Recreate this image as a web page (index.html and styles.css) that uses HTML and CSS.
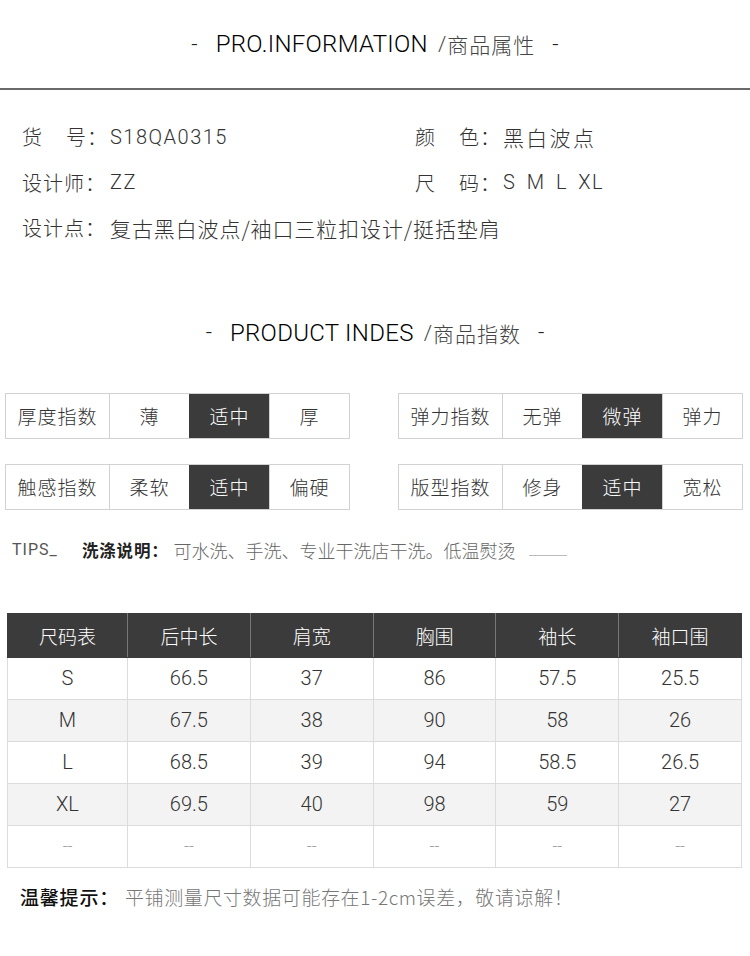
FILE: index.html
```html
<!DOCTYPE html>
<html lang="zh-CN">
<head>
<meta charset="utf-8">
<title>商品属性</title>
<link rel="stylesheet" href="styles.css">
</head>
<body>
<div class="page">
  <header class="sec-title first">
    <span class="dash">-</span>
    <span class="en">PRO.INFORMATION</span>
    <span class="slash">/</span><span class="cn">商品属性</span>
    <span class="dash">-</span>
  </header>
  <div class="rule"></div>

  <section class="info">
    <div class="info-row">
      <div class="item"><span class="lbl">货<i class="sp"></i>号：</span><span class="val">S18QA0315</span></div>
      <div class="item right"><span class="lbl">颜<i class="sp"></i>色：</span><span class="val cjk">黑白波点</span></div>
    </div>
    <div class="info-row">
      <div class="item"><span class="lbl">设计师：</span><span class="val">ZZ</span></div>
      <div class="item right"><span class="lbl">尺<i class="sp"></i>码：</span><span class="val sizes">S M L XL</span></div>
    </div>
    <div class="info-row">
      <div class="item wide"><span class="lbl">设计点：</span><span class="val cjk tight">复古黑白波点/袖口三粒扣设计/挺括垫肩</span></div>
    </div>
  </section>

  <header class="sec-title second">
    <span class="dash">-</span>
    <span class="en">PRODUCT INDES</span>
    <span class="slash">/</span><span class="cn">商品指数</span>
    <span class="dash">-</span>
  </header>

  <section class="indexes">
    <div class="idx-row">
      <div class="idx"><div class="c lab">厚度指数</div><div class="c">薄</div><div class="c on">适中</div><div class="c">厚</div></div>
      <div class="idx"><div class="c lab">弹力指数</div><div class="c">无弹</div><div class="c on">微弹</div><div class="c">弹力</div></div>
    </div>
    <div class="idx-row">
      <div class="idx"><div class="c lab">触感指数</div><div class="c">柔软</div><div class="c on">适中</div><div class="c">偏硬</div></div>
      <div class="idx"><div class="c lab">版型指数</div><div class="c">修身</div><div class="c on">适中</div><div class="c">宽松</div></div>
    </div>
  </section>

  <div class="tips">
    <span class="tips-en">TIPS_</span>
    <span class="tips-lbl">洗涤说明：</span>
    <span class="tips-txt">可水洗、手洗、专业干洗店干洗。低温熨烫</span>
    <span class="tips-line"></span>
  </div>

  <table class="size-table">
    <thead>
      <tr><th>尺码表</th><th>后中长</th><th>肩宽</th><th>胸围</th><th>袖长</th><th>袖口围</th></tr>
    </thead>
    <tbody>
      <tr><td>S</td><td>66.5</td><td>37</td><td>86</td><td>57.5</td><td>25.5</td></tr>
      <tr class="alt"><td>M</td><td>67.5</td><td>38</td><td>90</td><td>58</td><td>26</td></tr>
      <tr><td>L</td><td>68.5</td><td>39</td><td>94</td><td>58.5</td><td>26.5</td></tr>
      <tr class="alt"><td>XL</td><td>69.5</td><td>40</td><td>98</td><td>59</td><td>27</td></tr>
      <tr class="empty"><td>--</td><td>--</td><td>--</td><td>--</td><td>--</td><td>--</td></tr>
    </tbody>
  </table>

  <p class="note"><span class="note-lbl">温馨提示：</span><span class="note-txt">平铺测量尺寸数据可能存在1-2cm误差，敬请谅解！</span></p>
</div>
</body>
</html>
```

FILE: styles.css
```css
html, body {
  margin: 0;
  padding: 0;
  background: #fff;
}
body {
  font-family: Roboto, "Noto Sans CJK SC", sans-serif;
  color: #333;
}
.page {
  width: 750px;
  height: 956px;
  overflow: hidden;
}

/* section titles */
.sec-title {
  display: flex;
  justify-content: center;
  align-items: center;
  height: 44px;
  color: #111;
  white-space: nowrap;
}
.sec-title.first {
  margin-top: 22px;
}
.sec-title .en {
  font-family: Roboto, sans-serif;
  font-size: 24px;
  font-weight: 300;
  letter-spacing: 0.3px;
  margin: 0 10px 0 18px;
  color: #000;
}
.sec-title .dash {
  font-size: 22px;
  font-weight: 300;
  color: #222;
}
.sec-title .slash {
  font-size: 21px;
  font-weight: 300;
  color: #444;
  margin-right: 1px;
}
.sec-title .cn {
  font-family: "Noto Sans CJK SC", sans-serif;
  font-size: 21px;
  font-weight: 300;
  letter-spacing: 1px;
  color: #444;
  margin-right: 17px;
}
.rule {
  margin-top: 22px;
  height: 2px;
  background: #6a6a6a;
}

/* info */
.info {
  padding: 24px 0 0 22px;
}
.info-row {
  display: flex;
  height: 45.5px;
  align-items: center;
}
.item {
  display: flex;
  align-items: center;
  width: 393px;
  font-family: Roboto, "Noto Sans CJK SC", sans-serif;
  font-size: 20px;
  font-weight: 300;
  color: #333;
  white-space: nowrap;
}
.item.right,
.item.wide {
  width: auto;
}
.lbl {
  display: inline-flex;
  width: 88px;
  letter-spacing: 1px;
  font-family: "Noto Sans CJK SC", sans-serif;
}
.sp {
  display: inline-block;
  width: 23px;
}
.val {
  letter-spacing: 1.5px;
}
.val.cjk {
  font-family: "Noto Sans CJK SC", sans-serif;
  font-size: 21px;
  letter-spacing: 2.3px;
}
.val.cjk.tight {
  letter-spacing: 0.9px;
}
.val.sizes {
  word-spacing: 4px;
}

.sec-title.second {
  margin-top: 60px;
}

/* indexes */
.indexes {
  margin-top: 38px;
  padding-left: 5px;
}
.idx-row {
  display: flex;
  gap: 48px;
  margin-bottom: 25px;
}
.idx {
  display: flex;
  border: 1px solid #d2d2d2;
  height: 44px;
}
.c {
  width: 79px;
  display: flex;
  align-items: center;
  justify-content: center;
  font-family: "Noto Sans CJK SC", sans-serif;
  font-weight: 300;
  font-size: 19px;
  letter-spacing: 1px;
  color: #333;
  border-left: 1px solid #d2d2d2;
}
.c.lab {
  width: 103px;
  border-left: none;
}
.c.on {
  background: #3b3b3b;
  color: #fff;
  border-left-color: #3b3b3b;
}

/* tips */
.tips {
  display: flex;
  align-items: center;
  margin-top: 11px;
  padding-left: 12px;
  height: 30px;
}
.tips-en {
  font-family: Roboto, sans-serif;
  font-size: 16px;
  letter-spacing: 1px;
  color: #555;
  width: 70px;
}
.tips-lbl {
  font-family: "Noto Sans CJK SC", sans-serif;
  font-size: 16.5px;
  font-weight: 700;
  letter-spacing: 0.8px;
  color: #222;
}
.tips-txt {
  font-family: "Noto Sans CJK SC", sans-serif;
  font-size: 18px;
  font-weight: 300;
  color: #666;
  margin-left: 5px;
}
.tips-line {
  width: 38px;
  height: 1px;
  background: #bbb;
  margin-left: 13px;
  margin-top: 12px;
}

/* size table */
.size-table {
  margin: 48px 0 0 7px;
  border-collapse: collapse;
  width: 735px;
  table-layout: fixed;
}
.size-table th,
.size-table td {
  text-align: center;
  padding: 0;
  border: 1px solid #dcdcdc;
}
.size-table th {
  background: #3b3b3b;
  color: #fff;
  height: 43px;
  font-family: "Noto Sans CJK SC", sans-serif;
  font-weight: 300;
  font-size: 19px;
  border-color: #3b3b3b;
  border-right-color: #777;
}
.size-table th:first-child { width: 119px; }
.size-table th:last-child { border-right-color: #3b3b3b; }
.size-table td {
  height: 41px;
  font-family: Roboto, sans-serif;
  font-weight: 300;
  font-size: 20px;
  color: #333;
}
.size-table tr.alt td {
  background: #f3f3f3;
}
.size-table tr.empty td {
  color: #999;
  font-size: 17px;
}

/* note */
.note {
  margin: 15px 0 0 20px;
  display: flex;
  align-items: center;
  white-space: nowrap;
}
.note-lbl {
  font-family: "Noto Sans CJK SC", sans-serif;
  font-size: 19px;
  font-weight: 500;
  letter-spacing: 0.8px;
  color: #111;
}
.note-txt {
  font-family: "Noto Sans CJK SC", sans-serif;
  font-size: 19px;
  font-weight: 300;
  letter-spacing: 0.6px;
  color: #777;
  margin-left: 6px;
}
```
